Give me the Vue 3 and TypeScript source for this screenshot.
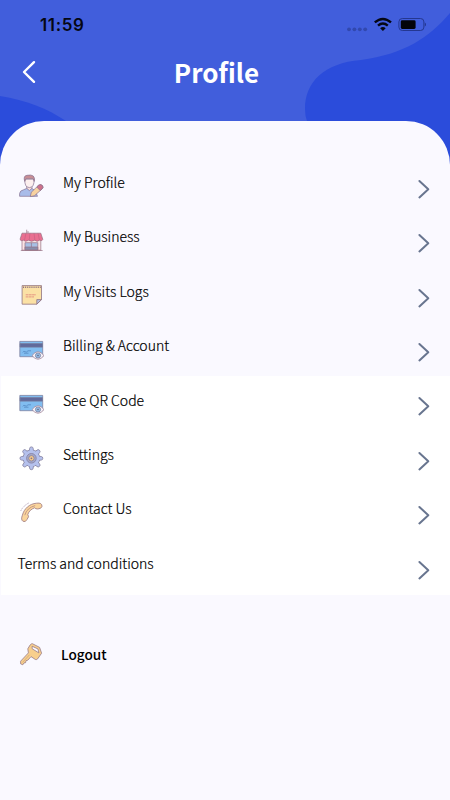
<script setup lang="ts">
interface MenuItem {
  label: string
  icon?: 'user' | 'shop' | 'note' | 'card' | 'gear' | 'phone'
}

const accountItems: MenuItem[] = [
  { label: 'My Profile', icon: 'user' },
  { label: 'My Business', icon: 'shop' },
  { label: 'My Visits Logs', icon: 'note' },
  { label: 'Billing & Account', icon: 'card' },
]
const generalItems: MenuItem[] = [
  { label: 'See QR Code', icon: 'card' },
  { label: 'Settings', icon: 'gear' },
  { label: 'Contact Us', icon: 'phone' },
  { label: 'Terms and conditions' },
]
const groups = [
  { name: 'account', items: accountItems },
  { name: 'general', items: generalItems },
]
const teeth = [0, 45, 90, 135, 180, 225, 270, 315]
</script>

<template>
  <div class="screen">
    <header class="header">
      <svg class="waves" viewBox="0 0 450 165" aria-hidden="true">
        <path d="M0 96C26 100 48 109 66 121V165H0Z" />
        <path d="M450 13C429 38 404 54 361 60C324 63 305 82 305 109Q305 116 307 121V165H450Z" />
      </svg>
      <div class="status">
        <span class="time">11:59</span>
        <svg class="indicators" width="82" height="16" viewBox="0 0 82 16">
          <g fill="#3148ae">
            <circle cx="5" cy="12.3" r="1.9" /><circle cx="10.4" cy="12.3" r="1.9" />
            <circle cx="15.8" cy="12.3" r="1.9" /><circle cx="21.2" cy="12.3" r="1.9" />
          </g>
          <g fill="none" stroke="#050713" stroke-width="2.4">
            <path d="M30.8 5.4Q38.9-1.5 47 5.4" />
            <path d="M34 8.6Q38.9 4.3 43.8 8.6" />
          </g>
          <path d="M36.1 11.2Q38.9 9 41.7 11.2L38.9 14Z" fill="#050713" />
          <rect x="54.9" y="1.5" width="25" height="12" rx="3.4" fill="none" stroke="#243790" />
          <rect x="56.8" y="3.3" width="14.8" height="8.6" rx="1.4" fill="#03040b" />
          <path d="M80.8 5.5Q82 6 82 7.5T80.8 9.5Z" fill="#243790" />
        </svg>
      </div>
      <div class="titlebar">
        <svg class="back" width="16" height="24" viewBox="0 0 16 24">
          <path d="M14 2.2L4 12L14 21.8" />
        </svg>
        <h1>Profile</h1>
      </div>
    </header>

    <main class="sheet">
      <nav>
        <ul v-for="group in groups" :key="group.name" :class="['group', group.name]">
          <li v-for="item in group.items" :key="item.label" class="row">
            <svg v-if="item.icon" class="icon" width="26" height="26" viewBox="0 0 26 26">
              <g v-if="item.icon === 'user'" stroke="#86718f" stroke-width=".7" stroke-linejoin="round">
                <path d="M1.6 23.3V20.5Q2 17.5 5.5 16.8L8.5 15.5H14L17 17.5L19.5 23.3Z" fill="#a9bce9" />
                <path d="M8.7 15.3L11.4 17.6L14 15.3V12H8.7Z" fill="#f8e0df" />
                <path d="M6.9 6Q6.2 14.4 11.4 14.6Q16.6 14.4 16 6Z" fill="#fcefee" />
                <path d="M6.7 8.4Q5 2.7 9 2.3Q17.8 .6 16.3 8.4L15.2 5.8H8Z" fill="#c78e95" />
                <path d="M12.3 23.6L13.3 19.2L20.7 12.2Q22.8 10.8 24.5 12.7Q25.7 14.4 24.1 15.9L16.4 22.8Z" fill="#f7d2a0" />
                <path d="M18.8 14L20.7 12.2Q22.8 10.8 24.5 12.7Q25.7 14.4 24.1 15.9L22.2 17.6Z" fill="#cf718b" />
              </g>
              <g v-else-if="item.icon === 'shop'" stroke="#967184" stroke-width=".7" stroke-linejoin="round">
                <path d="M8.7 5.2V1.7M10 3V5.2" fill="none" />
                <path d="M4 11.2H22.8V22.2H4Z" fill="#fae5e5" />
                <path d="M4 5.2H22.8L24.8 11.4Q24.2 13.4 21.4 12.2Q19.2 14.4 16.8 12.2Q13.4 14.4 10.6 12.2Q7.2 14.4 5.6 12.2Q2.7 13.4 2 11.4Z" fill="#e96f91" />
                <path d="M8 5.2L6.5 12M12 5.2L11.2 12.2M16 5.2L16.9 12.2M20 5.2L21.4 12" stroke="#c76283" fill="none" />
                <path d="M7 14.7H19.8V21.9H7Z" fill="#a8c0e4" />
                <path d="M7 19H19.8V21.9H7Z" fill="#888fad" />
                <path d="M13.4 14.7V19M2.8 22.5H24.6" fill="none" />
              </g>
              <g v-else-if="item.icon === 'note'" stroke="#907382" stroke-width=".8" stroke-linejoin="round">
                <path d="M4.1 3.6H23.5V17.6L18.8 22.2H4.1Z" fill="#fbe1a5" />
                <path d="M5 5.2H22.8" stroke-width="1.5" stroke-dasharray="1.1 1" />
                <path d="M18.8 22.2V17.6H23.5Z" fill="#b4c0e1" />
                <path d="M7.7 12.8H18M7.7 14.9H16" stroke="#e59582" stroke-width="1" stroke-dasharray="2.8 .4" />
              </g>
              <g v-else-if="item.icon === 'card'" stroke="#777796" stroke-width=".7" stroke-linejoin="round">
                <path d="M1.8 4.4H24.7V19.7H1.8Z" fill="#81bdf0" />
                <path d="M2.1 6.6H24.4V10.1H2.1Z" fill="#606a9c" />
                <path d="M4.7 15.4Q6 13.5 7.1 14.7T10 13.8H13M6 16.2H10.5" fill="none" stroke="#4f82bb" />
                <path d="M14 18.6Q20 10.8 26 18.6Q20 26 14 18.6Z" fill="#f7f4fa" stroke="#9b7c91" />
                <circle cx="20" cy="18.5" r="2.6" fill="#92bbe4" />
                <circle cx="20" cy="18.5" r=".8" fill="#656682" stroke="none" />
              </g>
              <g v-else-if="item.icon === 'gear'" stroke="#837f9e" stroke-width=".8" stroke-linejoin="round">
                <circle cx="13.4" cy="13.3" r="8.3" fill="#b5c1ed" />
                <path
                  v-for="angle in teeth"
                  :key="angle"
                  d="M10.8 5.9Q11.7 5.2 11.6 3.5Q11.7 1.9 13.4 1.9Q15.1 1.9 15.2 3.5Q15.1 5.2 16 5.9"
                  fill="#b5c1ed"
                  :transform="`rotate(${angle} 13.4 13.3)`"
                />
                <circle cx="13.4" cy="13.3" r="7.9" fill="#b5c1ed" stroke="none" />
                <circle cx="13.4" cy="13.3" r="4.8" fill="#a4a8cb" />
                <circle cx="13.4" cy="13.3" r="2.7" fill="#f6ca89" />
                <circle cx="13.4" cy="13.3" r=".9" fill="#897587" stroke="none" />
              </g>
              <g v-else stroke="#9c7780" stroke-width=".8" stroke-linejoin="round">
                <path
                  d="M4.4 15.2C6 8.7 11.5 3.7 18.6 3.2Q24.1 2.4 24 6.4Q23.3 8.8 19.8 9Q17.4 9 16.6 7.8C13.4 9 10.8 11.2 9.8 14.5Q11.7 16.5 9 19.5Q7.4 22.7 4.9 21.2Q2.6 19.6 4.4 15.2Z"
                  fill="#f9d49c"
                />
                <path d="M6.8 15.2Q8.9 7.7 17.2 5.6" fill="none" stroke="#b98a7e" />
                <path d="M2.7 11Q5.2 5.7 11.5 2.6" fill="none" stroke="#a995b0" stroke-dasharray="1.5 1" />
              </g>
            </svg>
            <span class="label">{{ item.label }}</span>
            <svg class="chevron" width="14" height="20" viewBox="0 0 14 20">
              <path d="M2.4 2L11.3 10.2L2.4 18.4" />
            </svg>
          </li>
        </ul>
      </nav>
      <div class="logout">
        <svg class="icon" width="26" height="26" viewBox="0 0 26 26">
          <g stroke="#987b87" stroke-width=".8" stroke-linejoin="round">
            <path d="M10.4 11.9L2.6 20.2V22.8L4.8 23.8L6 21.9L7.6 21.7L8 19.6L9.8 19.2L13 15.6L17.4 18.5Q18.8 18.9 19.7 17.8L23.6 12.2L21.6 6.4L14.4 2.7Q13.2 2.6 12.1 4L9.8 7.8Z" fill="#f8cf8d" />
            <path d="M14.1 5.2L20 8L20.9 11.9L14.2 7.8Z" fill="#fbfaff" />
            <path d="M11.5 13.8L4.5 21.4" fill="none" stroke="#cda678" />
          </g>
        </svg>
        <span>Logout</span>
      </div>
    </main>
  </div>
</template>

<style>
body {
  margin: 0;
  background: #faf9ff;
}
</style>

<style scoped>
.screen {
  display: flex;
  flex-direction: column;
  width: 450px;
  height: 800px;
  overflow: hidden;
  background: #faf9ff;
  color: #000;
  font-family: 'Noto Sans CJK SC', 'Noto Sans', sans-serif;
}
.header {
  position: relative;
  flex: none;
  height: 165px;
  background: #415edc;
}
.waves {
  position: absolute;
  inset: 0;
  width: 450px;
  height: 165px;
  fill: #2b4cdb;
}
.status {
  position: relative;
  display: flex;
  justify-content: space-between;
  align-items: center;
  height: 48px;
  padding: 0 24px 0 40px;
}
.time {
  font: 600 17px/20px Inter, sans-serif;
  color: #050713;
  letter-spacing: 0.65px;
  padding-top: 2px;
}
.indicators {
  margin-top: 1px;
}
.titlebar {
  position: relative;
  display: grid;
  grid-template-columns: 60px 1fr 60px;
  align-items: center;
  height: 48px;
}
.back {
  margin-left: 20px;
}
.back path {
  fill: none;
  stroke: #fff;
  stroke-width: 2.4;
  stroke-linecap: round;
  stroke-linejoin: round;
}
h1 {
  margin: 0;
  padding-right: 17px;
  color: #fff;
  text-align: center;
  font-size: 26px;
  line-height: 40px;
  font-weight: 700;
}
.sheet {
  position: relative;
  flex: 1;
  box-sizing: border-box;
  margin-top: -44px;
  padding-top: 37.4px;
  border-radius: 44px 44px 0 0;
  background: #faf9ff;
}
.group {
  margin: 0;
  padding: 0;
  list-style: none;
}
.general {
  margin-left: 1px;
  padding-bottom: 1px;
  background: #fff;
}
.row {
  display: flex;
  align-items: flex-start;
  box-sizing: border-box;
  height: 54.4px;
  padding: 11.6px 19px 0 17.5px;
}
.general .row {
  padding-left: 16.5px;
}
.icon {
  flex: none;
  margin-top: 3.4px;
  margin-right: 19.5px;
}
.label {
  flex: 1;
  font-size: 14px;
  line-height: 24px;
  font-weight: 300;
  -webkit-text-stroke: 0.2px #000;
  white-space: nowrap;
}
.chevron {
  flex: none;
  margin-top: 8.9px;
}
.chevron path {
  fill: none;
  stroke: #68758f;
  stroke-width: 2;
  stroke-linecap: round;
  stroke-linejoin: round;
}
.logout {
  display: flex;
  align-items: center;
  padding: 46.4px 18px 0;
  font-size: 13.6px;
  line-height: 26px;
  font-weight: 500;
}
.logout .icon {
  margin-top: 0;
  margin-right: 17px;
}
</style>
